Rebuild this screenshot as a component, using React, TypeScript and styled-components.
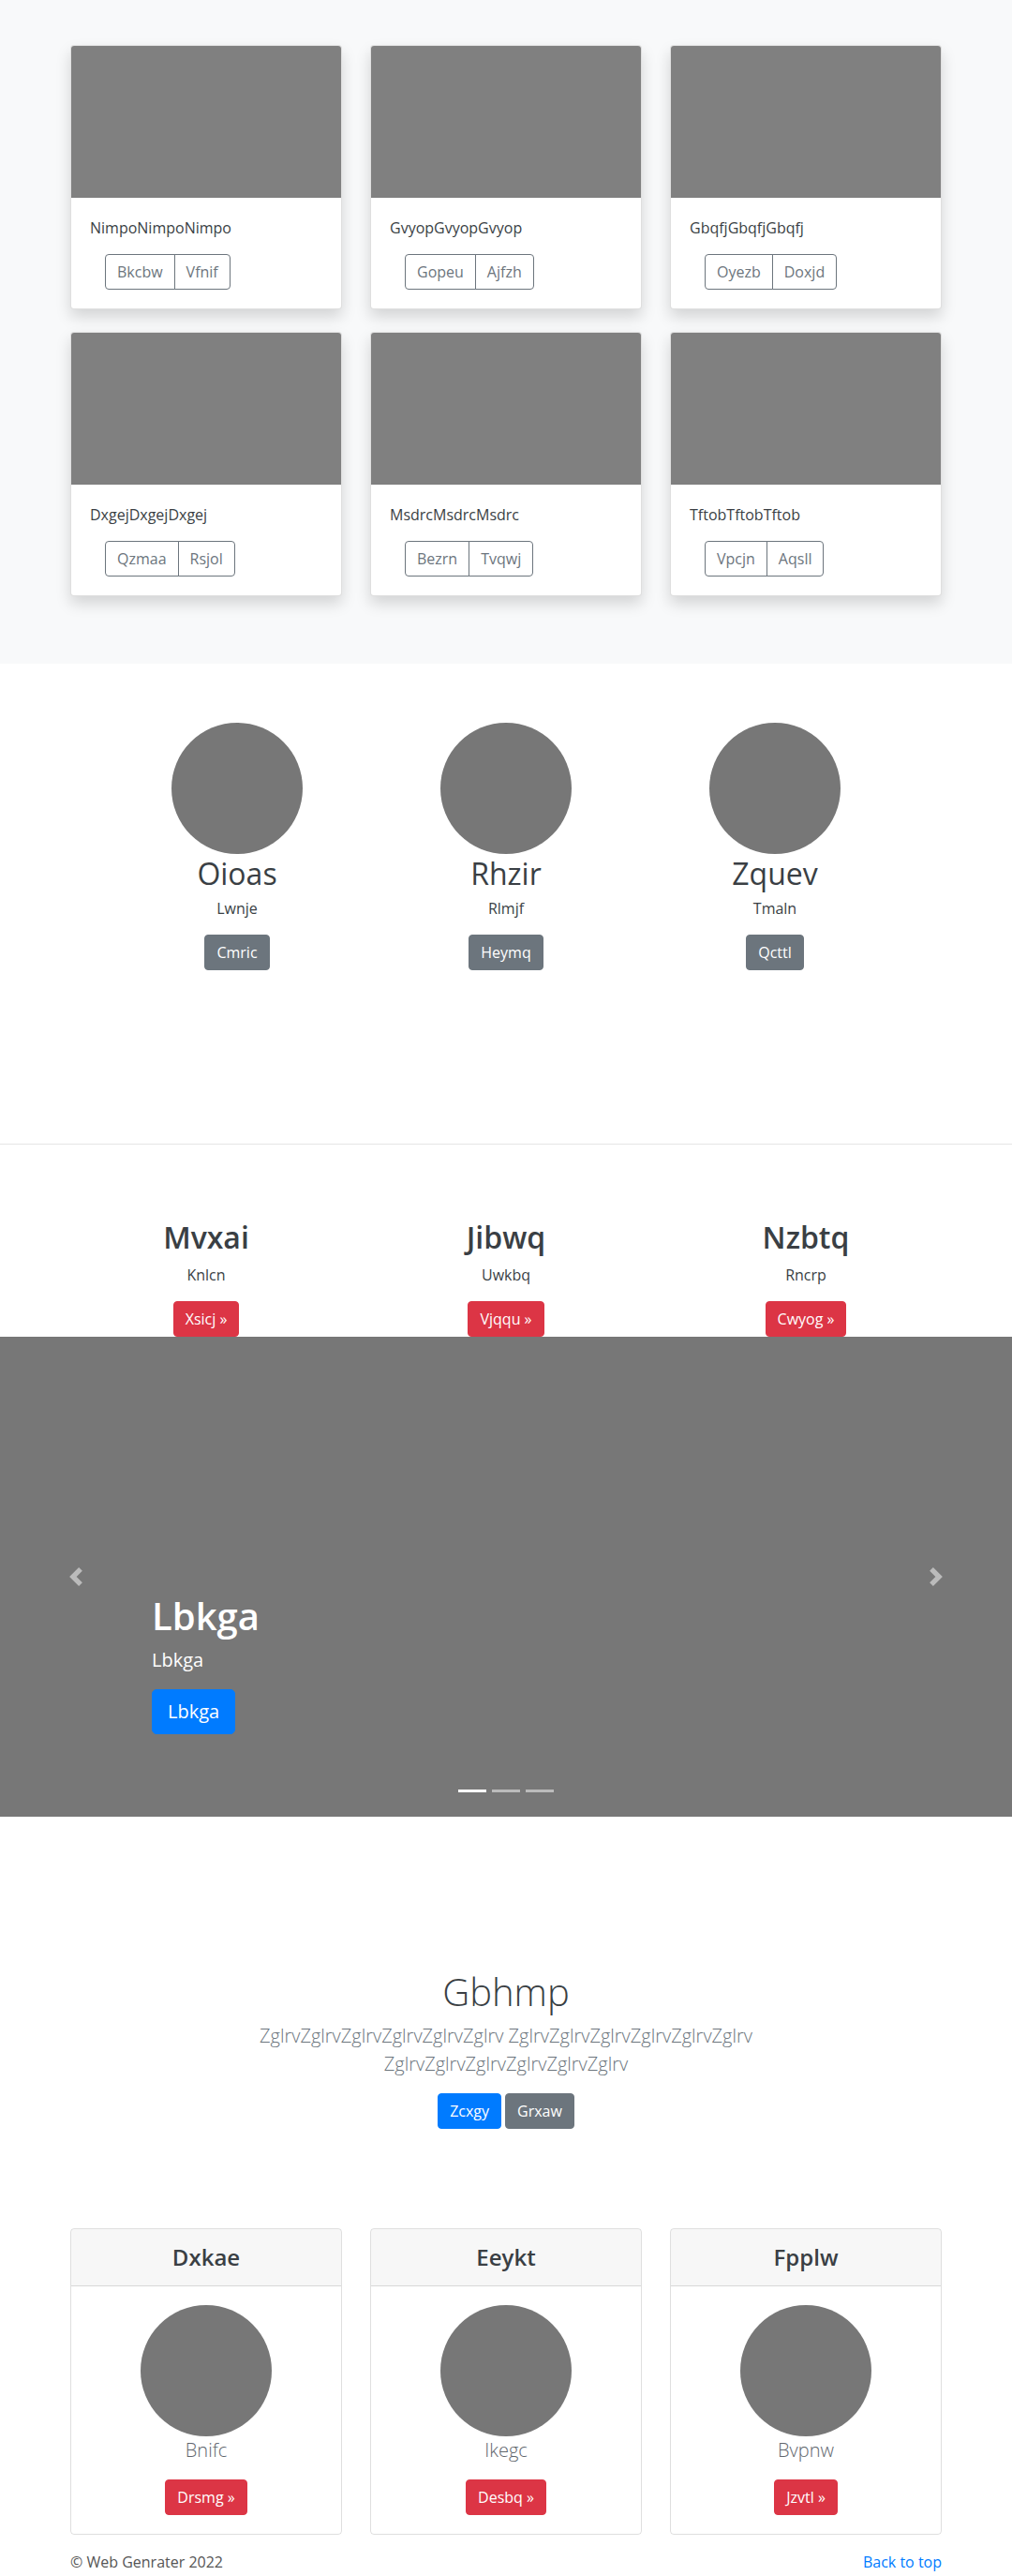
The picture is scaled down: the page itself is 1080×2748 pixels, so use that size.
import React from "react";
import styled, { createGlobalStyle } from "styled-components";

const GlobalStyle = createGlobalStyle`
  body {
    margin: 0;
    background: #fff;
    color: #3a3f44;
    font-family: "Open Sans", "Noto Sans", "Liberation Sans", sans-serif;
    font-size: 16px;
    line-height: 1.5;
  }
  * {
    box-sizing: border-box;
  }
`;

const albumItems = [
  { text: "NimpoNimpoNimpo", buttons: ["Bkcbw", "Vfnif"] },
  { text: "GvyopGvyopGvyop", buttons: ["Gopeu", "Ajfzh"] },
  { text: "GbqfjGbqfjGbqfj", buttons: ["Oyezb", "Doxjd"] },
  { text: "DxgejDxgejDxgej", buttons: ["Qzmaa", "Rsjol"] },
  { text: "MsdrcMsdrcMsdrc", buttons: ["Bezrn", "Tvqwj"] },
  { text: "TftobTftobTftob", buttons: ["Vpcjn", "Aqsll"] },
];

const people = [
  { name: "Oioas", role: "Lwnje", action: "Cmric" },
  { name: "Rhzir", role: "Rlmjf", action: "Heymq" },
  { name: "Zquev", role: "Tmaln", action: "Qcttl" },
];

const features = [
  { title: "Mvxai", text: "Knlcn", action: "Xsicj »" },
  { title: "Jibwq", text: "Uwkbq", action: "Vjqqu »" },
  { title: "Nzbtq", text: "Rncrp", action: "Cwyog »" },
];

const plans = [
  { title: "Dxkae", text: "Bnifc", action: "Drsmg »" },
  { title: "Eeykt", text: "Ikegc", action: "Desbq »" },
  { title: "Fpplw", text: "Bvpnw", action: "Jzvtl »" },
];

export default function App() {
  return (
    <>
      <GlobalStyle />
      <Album>
        <Container>
          <CardGrid>
            {albumItems.map((item) => (
              <AlbumCard key={item.text}>
                <CardImage />
                <CardBody>
                  <CardText>{item.text}</CardText>
                  <ButtonGroup>
                    {item.buttons.map((b) => (
                      <OutlineButton key={b}>{b}</OutlineButton>
                    ))}
                  </ButtonGroup>
                </CardBody>
              </AlbumCard>
            ))}
          </CardGrid>
        </Container>
      </Album>

      <Team>
        <TeamRow>
          {people.map((p) => (
            <TeamColumn key={p.name}>
              <Circle />
              <TeamName>{p.name}</TeamName>
              <Paragraph>{p.role}</Paragraph>
              <Button $variant="secondary">{p.action}</Button>
            </TeamColumn>
          ))}
        </TeamRow>
      </Team>

      <Divider />

      <Features>
        <Container>
          <FeatureRow>
            {features.map((f) => (
              <FeatureColumn key={f.title}>
                <FeatureTitle>{f.title}</FeatureTitle>
                <Paragraph>{f.text}</Paragraph>
                <Button $variant="danger">{f.action}</Button>
              </FeatureColumn>
            ))}
          </FeatureRow>
        </Container>
      </Features>

      <Carousel>
        <CarouselControl $side="left" aria-label="Previous">
          <svg width="20" height="20" viewBox="0 0 8 8" fill="#fff">
            <path d="M5.25 0l-4 4 4 4 1.5-1.5L4.25 4l2.5-2.5L5.25 0z" />
          </svg>
        </CarouselControl>
        <CarouselCaption>
          <CaptionTitle>Lbkga</CaptionTitle>
          <CaptionText>Lbkga</CaptionText>
          <CaptionAction>
            <Button $variant="primary" $large>
              Lbkga
            </Button>
          </CaptionAction>
        </CarouselCaption>
        <CarouselControl $side="right" aria-label="Next">
          <svg width="20" height="20" viewBox="0 0 8 8" fill="#fff">
            <path d="M2.75 0l-1.5 1.5L3.75 4l-2.5 2.5L2.75 8l4-4-4-4z" />
          </svg>
        </CarouselControl>
        <Indicators>
          <Indicator $active />
          <Indicator />
          <Indicator />
        </Indicators>
      </Carousel>

      <Hero>
        <HeroTitle>Gbhmp</HeroTitle>
        <Lead>
          ZglrvZglrvZglrvZglrvZglrvZglrv ZglrvZglrvZglrvZglrvZglrvZglrv
          ZglrvZglrvZglrvZglrvZglrvZglrv
        </Lead>
        <HeroActions>
          <Button $variant="primary">Zcxgy</Button>
          <Button $variant="secondary">Grxaw</Button>
        </HeroActions>
      </Hero>

      <Container>
        <CardGrid>
          {plans.map((p) => (
            <PlanCard key={p.title}>
              <PlanHeader>{p.title}</PlanHeader>
              <PlanBody>
                <Circle />
                <PlanText>{p.text}</PlanText>
                <Button $variant="danger">{p.action}</Button>
              </PlanBody>
            </PlanCard>
          ))}
        </CardGrid>
      </Container>

      <Footer>
        <span>© Web Genrater 2022</span>
        <FooterLink href="#">Back to top</FooterLink>
      </Footer>
    </>
  );
}

const Container = styled.div`
  width: 960px;
  margin: 0 auto;
  padding: 0 15px;
`;

const CardGrid = styled.div`
  display: grid;
  grid-template-columns: repeat(3, 290px);
  column-gap: 30px;
  row-gap: 24px;
`;

const Album = styled.section`
  background: #f8f9fa;
  padding: 48px 0;
  height: 708px;
`;

const AlbumCard = styled.div`
  background: #fff;
  border: 1px solid rgba(0, 0, 0, 0.125);
  border-radius: 4px;
  box-shadow: 0 8px 16px rgba(0, 0, 0, 0.15);
  overflow: hidden;
`;

const CardImage = styled.div`
  height: 162px;
  background: #808080;
`;

const CardBody = styled.div`
  padding: 20px;
`;

const CardText = styled.p`
  margin: 0 0 16px;
`;

const ButtonGroup = styled.div`
  display: inline-flex;
  margin-left: 16px;
`;

const OutlineButton = styled.button`
  font: inherit;
  line-height: 24px;
  padding: 6px 12px;
  color: #6c757d;
  background: transparent;
  border: 1px solid #6c757d;
  &:first-child {
    border-radius: 4px 0 0 4px;
  }
  &:last-child {
    border-radius: 0 4px 4px 0;
    margin-left: -1px;
  }
`;

const variants = {
  primary: "#007bff",
  secondary: "#6c757d",
  danger: "#dc3545",
};

const Button = styled.button<{
  $variant: keyof typeof variants;
  $large?: boolean;
}>`
  display: inline-block;
  font-family: inherit;
  font-size: ${({ $large }) => ($large ? "20px" : "16px")};
  line-height: ${({ $large }) => ($large ? "30px" : "24px")};
  padding: ${({ $large }) => ($large ? "8px 16px" : "6px 12px")};
  border-radius: ${({ $large }) => ($large ? "5px" : "4px")};
  color: #fff;
  background: ${({ $variant }) => variants[$variant]};
  border: 1px solid ${({ $variant }) => variants[$variant]};
`;

const Paragraph = styled.p`
  margin: 0 0 16px;
`;

const Team = styled.section`
  padding: 63px 0 185px;
`;

const TeamRow = styled.div`
  display: grid;
  grid-template-columns: repeat(3, 287px);
  justify-content: center;
`;

const TeamColumn = styled.div`
  display: flex;
  flex-direction: column;
  align-items: center;
  text-align: center;
`;

const Circle = styled.div`
  width: 140px;
  height: 140px;
  border-radius: 50%;
  background: #777;
`;

const TeamName = styled.h2`
  margin: 2px 0 6px;
  font-size: 32px;
  font-weight: 400;
  line-height: 1.2;
`;

const Divider = styled.hr`
  margin: 0;
  border: 0;
  border-top: 1px solid #e5e5e5;
`;

const Features = styled.section`
  padding-top: 80px;
`;

const FeatureRow = styled.div`
  display: grid;
  grid-template-columns: repeat(3, 1fr);
  margin: 0 -15px;
`;

const FeatureColumn = styled.div`
  text-align: center;
`;

const FeatureTitle = styled.h2`
  margin: 0 0 8px;
  font-size: 32px;
  font-weight: 600;
  line-height: 1.2;
`;

const Carousel = styled.section`
  position: relative;
  height: 512px;
  background: #777;
`;

const CarouselControl = styled.div<{ $side: "left" | "right" }>`
  position: absolute;
  top: 0;
  bottom: 0;
  ${({ $side }) => $side}: 0;
  width: 15%;
  display: flex;
  align-items: center;
  justify-content: center;
  opacity: 0.5;
`;

const CarouselCaption = styled.div`
  position: absolute;
  left: 15%;
  right: 15%;
  bottom: 48px;
  padding: 20px 0;
  color: #fff;
`;

const CaptionTitle = styled.h1`
  margin: 0 0 8px;
  font-size: 40px;
  font-weight: 600;
  line-height: 1.2;
`;

const CaptionText = styled.p`
  margin: 0 0 16px;
  font-size: 20px;
  line-height: 30px;
`;

const CaptionAction = styled.div`
  margin-bottom: 20px;
`;

const Indicators = styled.div`
  position: absolute;
  left: 0;
  right: 0;
  bottom: 26px;
  display: flex;
  justify-content: center;
  gap: 6px;
`;

const Indicator = styled.span<{ $active?: boolean }>`
  width: 30px;
  height: 3px;
  background: #fff;
  opacity: ${({ $active }) => ($active ? 1 : 0.5)};
`;

const Hero = styled.section`
  padding: 163px 0 106px;
  text-align: center;
`;

const HeroTitle = styled.h1`
  margin: 0 0 8px;
  font-size: 40px;
  font-weight: 300;
  line-height: 1.2;
`;

const Lead = styled.p`
  max-width: 660px;
  margin: 0 auto 16px;
  font-size: 20px;
  font-weight: 300;
  line-height: 30px;
  color: #6c757d;
`;

const HeroActions = styled.div`
  display: flex;
  justify-content: center;
  gap: 4px;
  margin-top: 10px;
`;

const PlanCard = styled.div`
  border: 1px solid rgba(0, 0, 0, 0.125);
  border-radius: 4px;
  overflow: hidden;
`;

const PlanHeader = styled.h4`
  margin: 0;
  padding: 12px 20px;
  font-size: 24px;
  font-weight: 600;
  line-height: 36px;
  text-align: center;
  background: rgba(0, 0, 0, 0.03);
  border-bottom: 1px solid rgba(0, 0, 0, 0.125);
`;

const PlanBody = styled.div`
  display: flex;
  flex-direction: column;
  align-items: center;
  padding: 20px;
`;

const PlanText = styled.p`
  margin: 0 0 16px;
  font-size: 20px;
  font-weight: 300;
  line-height: 30px;
  color: #5f666d;
`;

const Footer = styled.footer`
  width: 960px;
  margin: 0 auto;
  padding: 17px 15px 0;
  display: flex;
  justify-content: space-between;
  color: #555;
`;

const FooterLink = styled.a`
  color: #007bff;
  text-decoration: none;
`;
